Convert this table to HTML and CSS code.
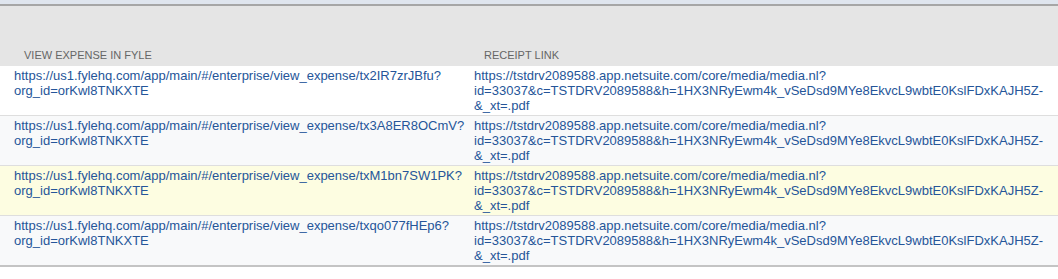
FILE: index.html
```html
<!DOCTYPE html>
<html lang="en">

<head>
  <meta charset="UTF-8">
  <title>Expense Receipts</title>
  <link rel="stylesheet" href="styles.css">
</head>

<body>
  <div class="top-strip"></div>

  <table class="list">
    <thead>
      <tr>
        <th class="col-fyle">View Expense in Fyle</th>
        <th>Receipt Link</th>
      </tr>
    </thead>
    <tbody>
      <tr>
        <td><a href="#">https://us1.fylehq.com/app/main/#/enterprise/view_expense/tx2IR7zrJBfu?<br>org_id=orKwl8TNKXTE</a></td>
        <td><a href="#">https://tstdrv2089588.app.netsuite.com/core/media/media.nl?<br>id=33037&amp;c=TSTDRV2089588&amp;h=1HX3NRyEwm4k_vSeDsd9MYe8EkvcL9wbtE0KslFDxKAJH5Z-<br>&amp;_xt=.pdf</a></td>
      </tr>
      <tr class="alt">
        <td><a href="#">https://us1.fylehq.com/app/main/#/enterprise/view_expense/tx3A8ER8OCmV?<br>org_id=orKwl8TNKXTE</a></td>
        <td><a href="#">https://tstdrv2089588.app.netsuite.com/core/media/media.nl?<br>id=33037&amp;c=TSTDRV2089588&amp;h=1HX3NRyEwm4k_vSeDsd9MYe8EkvcL9wbtE0KslFDxKAJH5Z-<br>&amp;_xt=.pdf</a></td>
      </tr>
      <tr class="hover">
        <td><a href="#">https://us1.fylehq.com/app/main/#/enterprise/view_expense/txM1bn7SW1PK?<br>org_id=orKwl8TNKXTE</a></td>
        <td><a href="#">https://tstdrv2089588.app.netsuite.com/core/media/media.nl?<br>id=33037&amp;c=TSTDRV2089588&amp;h=1HX3NRyEwm4k_vSeDsd9MYe8EkvcL9wbtE0KslFDxKAJH5Z-<br>&amp;_xt=.pdf</a></td>
      </tr>
      <tr class="alt">
        <td><a href="#">https://us1.fylehq.com/app/main/#/enterprise/view_expense/txqo077fHEp6?<br>org_id=orKwl8TNKXTE</a></td>
        <td><a href="#">https://tstdrv2089588.app.netsuite.com/core/media/media.nl?<br>id=33037&amp;c=TSTDRV2089588&amp;h=1HX3NRyEwm4k_vSeDsd9MYe8EkvcL9wbtE0KslFDxKAJH5Z-<br>&amp;_xt=.pdf</a></td>
      </tr>
    </tbody>
  </table>
</body>

</html>
```

FILE: styles.css
```css
* {
  box-sizing: border-box;
  margin: 0;
  padding: 0;
  font-family: "Liberation Sans", Arial, sans-serif;
}

body {
  background-color: #ffffff;
}

.top-strip {
  height: 6px;
  background-color: #dfe5ee;
  border-bottom: 2px solid #a6a6a6;
}

.list {
  width: 100%;
  table-layout: fixed;
  border-collapse: collapse;
  border-bottom: 2px solid #c4c4c4;
}

.list th {
  background-color: #e5e5e5;
  color: #666666;
  font-size: 11px;
  font-weight: normal;
  text-transform: uppercase;
  text-align: left;
  height: 60px;
  vertical-align: bottom;
  padding: 0 0 5px 24px;
}

.list th.col-fyle {
  width: 460px;
}

.list td {
  font-size: 13px;
  line-height: 15px;
  vertical-align: top;
  padding: 2px 0 2px 14px;
  height: 49px;
  white-space: nowrap;
  border-bottom: 1px solid #dedede;
}

.list tr:last-child td {
  border-bottom: none;
}

.list tr.alt td {
  background-color: #f8f9fa;
}

.list tr.hover td {
  background-color: #fdfde1;
}

.list a {
  color: #255599;
  text-decoration: none;
}
```
